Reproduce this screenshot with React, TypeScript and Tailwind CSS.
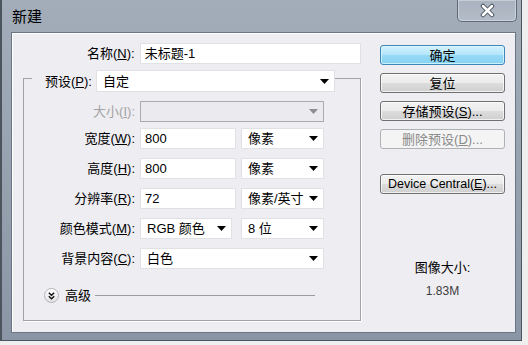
import React from "react";
import clsx from "clsx";

const Arrow = ({ disabled = false }: { disabled?: boolean }) => (
  <svg width="9" height="5" viewBox="0 0 9 5" className="shrink-0">
    <path d="M0 0h9L4.5 5z" fill={disabled ? "#8d8d8d" : "#000"} />
  </svg>
);

const Field = ({ value, className }: { value: string; className: string }) => (
  <div className={clsx("flex h-[21px] items-center border border-[#e1e0e5] bg-white pl-[4px]", className)}>
    {value}
  </div>
);

const Dropdown = ({
  value = "",
  className,
  disabled = false,
}: {
  value?: string;
  className: string;
  disabled?: boolean;
}) => (
  <div
    className={clsx(
      "flex h-[21px] items-center justify-between border pl-[6px] pr-[5px]",
      disabled ? "border-[#ababab] bg-[#ebeaee]" : "border-[#e1e0e5] bg-white",
      className
    )}
  >
    <span>{value}</span>
    <Arrow disabled={disabled} />
  </div>
);

const Label = ({ children, disabled = false }: { children: React.ReactNode; disabled?: boolean }) => (
  <span className={clsx("w-[111px] text-right", disabled && "text-[#a3a3a3]")}>{children}</span>
);

const Button = ({
  children,
  variant = "normal",
  className,
}: {
  children: React.ReactNode;
  variant?: "normal" | "default" | "disabled";
  className?: string;
}) => (
  <div
    className={clsx(
      "flex h-[20px] w-[125px] items-center justify-center rounded-[3px] border",
      variant === "normal" &&
        "border-[#707070] bg-[linear-gradient(to_bottom,#f2f2f2_0%,#ebebeb_50%,#dddddd_50%,#cfcfcf_100%)] shadow-[inset_0_0_0_1px_rgba(255,255,255,0.7)]",
      variant === "default" &&
        "border-[#3d86b8] bg-[linear-gradient(to_bottom,#d4f1fd_0%,#b2e5fa_50%,#97daf7_50%,#86d2f2_100%)] shadow-[inset_0_0_0_1px_rgba(220,248,255,0.8)]",
      variant === "disabled" && "border-[#adb2b5] bg-[#f4f4f4] text-[#8a8a8a]",
      className
    )}
  >
    {children}
  </div>
);

const CloseButton = () => (
  <div className="-mr-[1px] flex h-[22px] w-[60px] items-center justify-center rounded-b-[5px] border border-t-0 border-[#5e6a79] bg-[linear-gradient(to_bottom,#a9b3bf,#b3bcc7)] shadow-[inset_0_0_0_1px_rgba(255,255,255,0.35)]">
    <svg width="17" height="15" viewBox="0 0 17 15">
      <path d="M4 3l9 9M13 3l-9 9" stroke="#4b5563" strokeWidth="4.5" strokeLinecap="round" />
      <path d="M4 3l9 9M13 3l-9 9" stroke="#fff" strokeWidth="2.5" strokeLinecap="round" />
    </svg>
  </div>
);

export default function App() {
  return (
    <div className="h-[345px] w-[528px] bg-[#eeeeee] font-['Liberation_Sans','Noto_Sans_CJK_SC',sans-serif] text-[13px] leading-none text-black">
      <div className="flex h-[341px] w-[522px] flex-col border-b border-l-2 border-r border-[#4c545e] bg-[linear-gradient(to_bottom,#a3adb9,#98a3b1_45%,#8a96a6)] pb-[7px] pl-[9px] pr-[5px]">
        {/* title bar */}
        <div className="flex h-[32px] items-start justify-between">
          <span className="mt-[7px] pl-[1px] font-['Noto_Sans_CJK_SC',sans-serif] text-[15px] leading-[18px]">新建</span>
          <CloseButton />
        </div>

        {/* client area */}
        <div className="flex flex-1 border border-[#6b7684] bg-[#eeedf2] shadow-[inset_1px_1px_0_#fff]">
          <div className="flex w-[349px] flex-col pl-[11px]">
            <div className="mt-[10px] flex items-center gap-[5px]">
              <span className="w-[112px] text-right">
                名称(<u>N</u>):
              </span>
              <Field value="未标题-1" className="w-[222px]" />
            </div>

            <div className="mt-[14px] flex w-[338px] flex-col border border-[#a3a3a6] pb-[17px] shadow-[1px_1px_0_#fff]">
              <div className="-mt-[9px] flex h-[22px] items-center">
                <span className="ml-[8px] flex h-full w-[64px] items-center bg-[#eeedf2] pl-[13px]">
                  预设(<u>P</u>):
                </span>
                <Dropdown value="自定" className="h-[22px] w-[239px] pr-[4px]" />
              </div>

              <div className="mt-[9px] flex items-center gap-[5px]">
                <Label disabled>
                  大小(<u>I</u>):
                </Label>
                <Dropdown disabled className="w-[184px]" />
              </div>

              <div className="mt-[6px] flex items-center gap-[5px]">
                <Label>
                  宽度(<u>W</u>):
                </Label>
                <Field value="800" className="w-[96px]" />
                <Dropdown value="像素" className="w-[83px]" />
              </div>

              <div className="mt-[9px] flex items-center gap-[5px]">
                <Label>
                  高度(<u>H</u>):
                </Label>
                <Field value="800" className="w-[96px]" />
                <Dropdown value="像素" className="w-[83px]" />
              </div>

              <div className="mt-[9px] flex items-center gap-[5px]">
                <Label>
                  分辨率(<u>R</u>):
                </Label>
                <Field value="72" className="w-[96px]" />
                <Dropdown value="像素/英寸" className="w-[83px]" />
              </div>

              <div className="mt-[9px] flex items-center gap-[5px]">
                <Label>
                  颜色模式(<u>M</u>):
                </Label>
                <Dropdown value="RGB 颜色" className="w-[92px]" />
                <Dropdown value="8 位" className="ml-[4px] w-[83px]" />
              </div>

              <div className="mt-[9px] flex items-center gap-[5px]">
                <Label>
                  背景内容(<u>C</u>):
                </Label>
                <Dropdown value="白色" className="w-[184px]" />
              </div>

              <div className="ml-[20px] mt-[19px] flex h-[15px] items-center">
                <div className="flex h-[15px] w-[15px] items-center justify-center rounded-full border border-[#b4b4b8] bg-[linear-gradient(to_bottom,#ffffff,#e2e2e6)]">
                  <svg width="7" height="8" viewBox="0 0 7 8">
                    <path d="M0.8 0.8L3.5 3.3L6.2 0.8M0.8 4.3L3.5 6.8L6.2 4.3" stroke="#111" strokeWidth="1.4" fill="none" />
                  </svg>
                </div>
                <span className="ml-[6px]">高级</span>
                <div className="ml-[4px] h-px w-[220px] bg-[#9c9c9f]" />
              </div>
            </div>
          </div>

          <div className="ml-[19px] flex flex-col pt-[12px]">
            <div className="flex flex-col gap-[8px]">
              <Button variant="default">确定</Button>
              <Button>复位</Button>
              <Button>
                存储预设(<u>S</u>)...
              </Button>
              <Button variant="disabled">
                删除预设(<u>D</u>)...
              </Button>
            </div>
            <Button className="mt-[25px] text-[12.5px]">
              Device Central(<u>E</u>)...
            </Button>
            <div className="mt-[65px] flex flex-col items-center">
              <span className="leading-[17px]">图像大小:</span>
              <span className="mt-[7px] text-[12px] leading-[16px] text-[#3c3c3c]">1.83M</span>
            </div>
          </div>
        </div>
      </div>
    </div>
  );
}
